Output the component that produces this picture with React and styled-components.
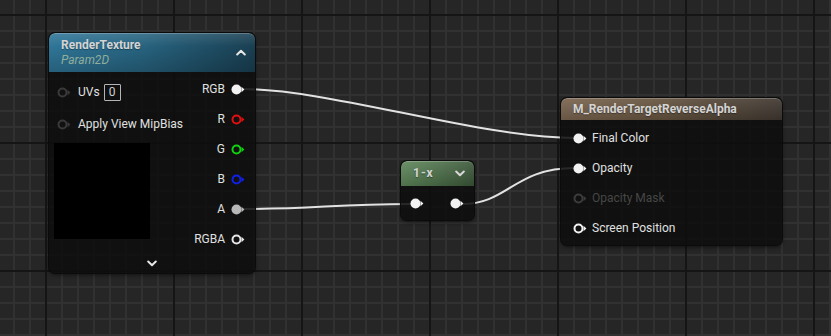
import React from 'react';
import styled, {createGlobalStyle, css} from 'styled-components';

const Global = createGlobalStyle`
html, body {
  margin:0;
  padding:0;
  background:#262626;
}
body{
  font-family: Roboto, "Open Sans", sans-serif;
}
`

const Canvas = styled.div`
position:relative;
width:831px;
height:336px;
overflow:hidden;
background-color:#262626;
background-image:
  linear-gradient(to right, #151515 2px, transparent 2px),
  linear-gradient(to bottom, #151515 2px, transparent 2px),
  linear-gradient(to right, #313131 2px, transparent 2px),
  linear-gradient(to bottom, #313131 2px, transparent 2px);
background-size:128px 128px, 128px 128px, 16px 16px, 16px 16px;
background-position:45px 14px, 45px 14px, 13px 14px, 13px 14px;
`

const Wires = styled.svg`
position:absolute;
left:0;
top:0;
path{
  fill:none;
  stroke:#e2e2e2;
  stroke-width:2;
}
`

const Node = styled.div`
position:absolute;
left:${p=>p.$x}px;
top:${p=>p.$y}px;
width:${p=>p.$w}px;
border-radius:6px;
overflow:hidden;
background:rgba(13,14,13,0.88);
box-shadow:0 0 0 1px #0b0b0b, 0 2px 4px rgba(0,0,0,0.55);
color:#dcdcdc;
font-size:12px;
`

const headers = {
    blue: css`
      background:
        linear-gradient(180deg, rgba(255,255,255,0.12) 0%, rgba(255,255,255,0) 35%, rgba(0,0,0,0.18) 100%),
        linear-gradient(90deg, #2f7597 0%, #27637f 45%, #193f52 100%);
    `,
    green: css`
      background:
        linear-gradient(180deg, rgba(255,255,255,0.10) 0%, rgba(0,0,0,0.15) 100%),
        linear-gradient(90deg, #5d8659 0%, #4c7049 50%, #3a5638 100%);
    `,
    brown: css`
      background:
        linear-gradient(180deg, rgba(255,255,255,0.08) 0%, rgba(0,0,0,0.15) 100%),
        linear-gradient(90deg, #7b6550 0%, #66543f 45%, #403831 100%);
    `,
}

const Header = styled.div`
display:flex;
align-items:center;
justify-content:space-between;
height:${p=>p.$h}px;
padding:0 9px 0 12px;
box-sizing:border-box;
border-radius:6px 6px 0 0;
box-shadow:inset 0 1px 0 rgba(255,255,255,0.22);
${p=>headers[p.$tone]}
`

const TitleBlock = styled.div`
display:flex;
flex-direction:column;
padding-top:1px;
`

const Title = styled.div`
font-weight:bold;
font-size:12px;
line-height:15px;
color:#d4d4d4;
letter-spacing:${p=>p.$spaced ? '1px' : '0'};
text-shadow:0 1px 1px rgba(0,0,0,0.35);
`

const Sub = styled.div`
font-style:italic;
font-size:12px;
line-height:15px;
color:#8fae9e;
`

const Columns = styled.div`
display:flex;
justify-content:space-between;
`

const Inputs = styled.div`
display:flex;
flex-direction:column;
gap:2px;
padding:5px 0 0 5px;
`

const Outputs = styled.div`
display:flex;
flex-direction:column;
padding:2px 10px 0 0;
`

const Row = styled.div`
display:flex;
align-items:center;
height:30px;
gap:${p=>p.$gap || 5}px;
justify-content:${p=>p.$out ? 'flex-end' : 'flex-start'};
padding-left:${p=>p.$pad || 0}px;
`

const Label = styled.span`
color:${p=>p.$dim ? '#474747' : '#e0e0e0'};
white-space:nowrap;
`

const ValueBox = styled.span`
display:inline-flex;
align-items:center;
justify-content:center;
width:15px;
height:15px;
border:1px solid #b4b4b4;
border-radius:1px;
margin-left:-3px;
color:#d0d0d0;
`

const Preview = styled.div`
width:96px;
height:96px;
margin-top:2px;
background:#000;
`

const Footer = styled.div`
display:flex;
justify-content:center;
align-items:center;
height:19px;
padding-bottom:1px;
box-sizing:border-box;
`

const PinBody = styled.div`
display:flex;
justify-content:space-between;
align-items:center;
height:34px;
padding:0 10px 0 9px;
`

const MBody = styled.div`
display:flex;
flex-direction:column;
padding:3px 0 2px 12px;
`

const Pin = ({color = '#f2f2f2', filled}) => (
    <svg width="14" height="11" viewBox="0 0 14 11">
        {filled
            ? <circle cx="5.5" cy="5.5" r="5" fill={color}/>
            : <circle cx="5.5" cy="5.5" r="4" fill="none" stroke={color} strokeWidth="2"/>}
        <polygon points="10.5,2.8 13.4,5.5 10.5,8.2" fill={color}/>
    </svg>
)

const Chevron = ({up, color = '#e6e6e6'}) => (
    <svg width="10" height="7" viewBox="0 0 10 7">
        <polyline
            points={up ? '1.2,5.5 5,1.8 8.8,5.5' : '1.2,1.5 5,5.2 8.8,1.5'}
            fill="none" stroke={color} strokeWidth="2" strokeLinecap="round" strokeLinejoin="round"/>
    </svg>
)

const outputs = [
    {name: 'RGB', color: '#f2f2f2', filled: true},
    {name: 'R', color: '#e01010'},
    {name: 'G', color: '#10d010'},
    {name: 'B', color: '#1020e8'},
    {name: 'A', color: '#b8b8b8', filled: true},
    {name: 'RGBA', color: '#e6e6e6'},
];

const materialPins = [
    {name: 'Final Color', filled: true},
    {name: 'Opacity', filled: true},
    {name: 'Opacity Mask', dim: true},
    {name: 'Screen Position'},
];

const App = () => {
    return (
        <Canvas>
            <Global/>
            <Wires width="831" height="336">
                <path d="M242,89 C330,89 480,138 575,138"/>
                <path d="M241,209 C320,209 330,204 412,204"/>
                <path d="M462,204 C508,204 514,168 575,168"/>
            </Wires>

            <Node $x={49} $y={33} $w={206}>
                <Header $tone="blue" $h={39}>
                    <TitleBlock>
                        <Title>RenderTexture</Title>
                        <Sub>Param2D</Sub>
                    </TitleBlock>
                    <Chevron up/>
                </Header>
                <Columns>
                    <Inputs>
                        <Row $gap={7} $pad={3}>
                            <Pin color="#3a3a3a"/>
                            <Label>UVs</Label>
                            <ValueBox>0</ValueBox>
                        </Row>
                        <Row $gap={7} $pad={3}>
                            <Pin color="#3a3a3a"/>
                            <Label>Apply View MipBias</Label>
                        </Row>
                        <Preview/>
                    </Inputs>
                    <Outputs>
                        {outputs.map(o => (
                            <Row $out $gap={6} key={o.name}>
                                <Label>{o.name}</Label>
                                <Pin color={o.color} filled={o.filled}/>
                            </Row>
                        ))}
                    </Outputs>
                </Columns>
                <Footer><Chevron/></Footer>
            </Node>

            <Node $x={401} $y={161} $w={73}>
                <Header $tone="green" $h={25}>
                    <Title $spaced>1-x</Title>
                    <Chevron color="#d8d8d8"/>
                </Header>
                <PinBody>
                    <Pin filled/>
                    <Pin filled/>
                </PinBody>
            </Node>

            <Node $x={561} $y={98} $w={221}>
                <Header $tone="brown" $h={22}>
                    <Title>M_RenderTargetReverseAlpha</Title>
                </Header>
                <MBody>
                    {materialPins.map(p => (
                        <Row key={p.name}>
                            <Pin color={p.dim ? '#3c3c3c' : '#f2f2f2'} filled={p.filled}/>
                            <Label $dim={p.dim}>{p.name}</Label>
                        </Row>
                    ))}
                </MBody>
            </Node>
        </Canvas>
    )
};
export default App
